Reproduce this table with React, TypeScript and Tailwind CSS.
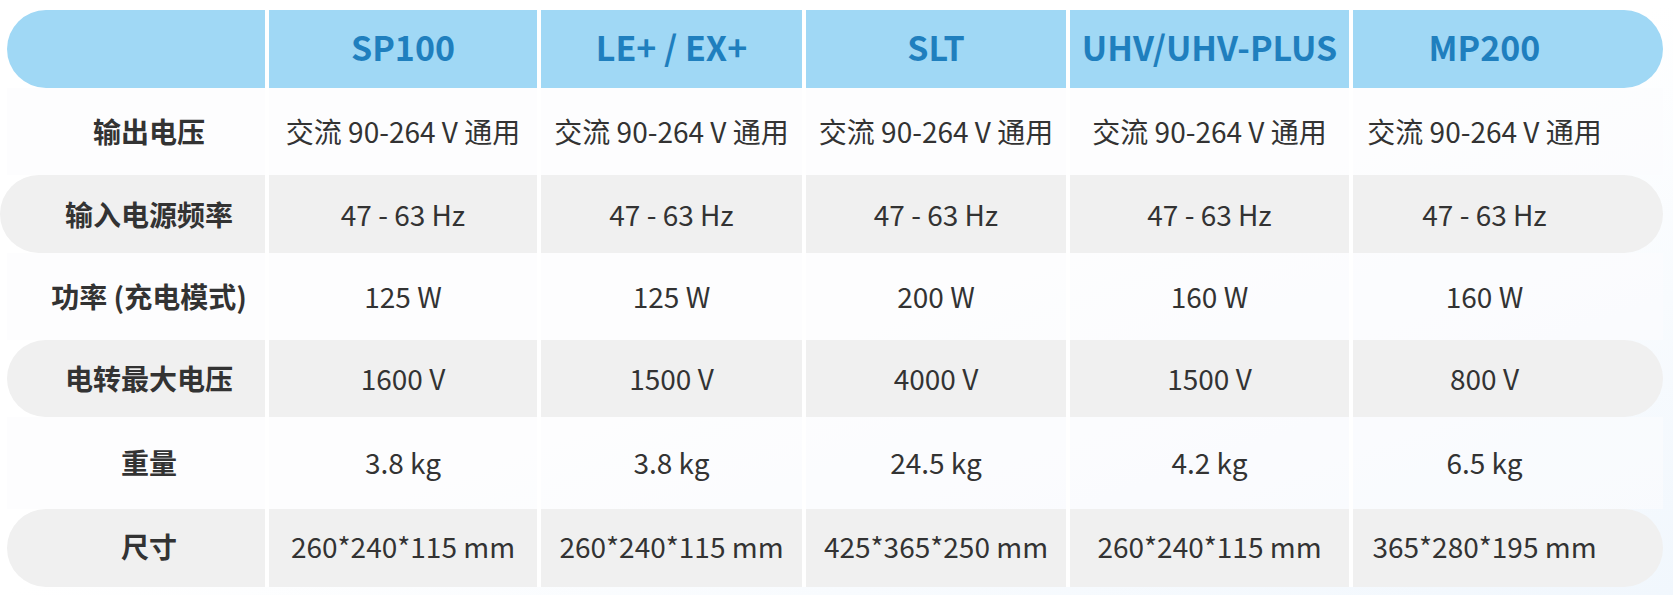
const models = ["SP100", "LE+ / EX+", "SLT", "UHV/UHV-PLUS", "MP200"];

const rows: { label: string; values: string[] }[] = [
  { label: "输出电压", values: Array(5).fill("交流 90-264 V 通用") },
  { label: "输入电源频率", values: Array(5).fill("47 - 63 Hz") },
  { label: "功率 (充电模式)", values: ["125 W", "125 W", "200 W", "160 W", "160 W"] },
  { label: "电转最大电压", values: ["1600 V", "1500 V", "4000 V", "1500 V", "800 V"] },
  { label: "重量", values: ["3.8 kg", "3.8 kg", "24.5 kg", "4.2 kg", "6.5 kg"] },
  { label: "尺寸", values: ["260*240*115 mm", "260*240*115 mm", "425*365*250 mm", "260*240*115 mm", "365*280*195 mm"] },
];

// widths include the 4px white separator on the left of each data column
const colWidths = ["w-[272px]", "w-[265px]", "w-[264px]", "w-[283px]", "w-[314px]"];
const rowHeights = ["h-[87px]", "h-[78px]", "h-[87px]", "h-[77px]", "h-[92px]", "h-[78px]"];
const rowPad = ["pb-[1px]", "pb-[1px]", "pb-[1px]", "pb-[1px]", "pb-[2px]", "pb-[5px]"];

export default function App() {
  return (
    <div
      className="min-h-[595px] w-full bg-linear-to-br from-white via-white to-[#f1f7fd] pt-[10px] pl-[7px]"
      style={{ fontFamily: '"Noto Sans CJK SC", "Noto Sans", sans-serif' }}
    >
      <div className="w-[1656px]">
        {/* Header */}
        <div className="flex h-[78px]">
          <div className="w-[258px] rounded-l-full bg-[#a0d8f5]" />
          {models.map((m, i) => (
            <div key={m} className={`${colWidths[i]} border-l-4 border-white`}>
              <div
                className={`flex h-full w-full items-center justify-center bg-[#a0d8f5] pb-[6px] ${i === 4 ? "rounded-r-full pr-[47px]" : ""}`}
              >
                <span className="text-[34px] font-bold text-[#1f7fbe]">{m}</span>
              </div>
            </div>
          ))}
        </div>

        {/* Body */}
        {rows.map((r, ri) => {
          const gray = ri % 2 === 1;
          return (
            <div key={r.label} className={`flex ${rowHeights[ri]}`}>
              <div
                className={`flex items-center justify-center ${rowPad[ri]} ${gray ? "rounded-l-full bg-[#f0f0f0]" : "bg-[#fbfcfe]/60"} ${ri === 1 ? "-ml-[7px] w-[265px] pl-[33px]" : "w-[258px] pl-[26px]"}`}
              >
                <span className="text-[28px] font-bold text-[#333333]">{r.label}</span>
              </div>
              {r.values.map((v, i) => (
                <div key={i} className={`${colWidths[i]} border-l-4 border-white`}>
                  <div
                    className={`flex h-full w-full items-center justify-center ${rowPad[ri]} ${gray ? "bg-[#f0f0f0]" : "bg-[#fbfcfe]/60"} ${i === 4 ? "pr-[47px]" : ""} ${gray && i === 4 ? "rounded-r-full" : ""}`}
                  >
                    <span className="text-[28px] text-[#333333]">{v}</span>
                  </div>
                </div>
              ))}
            </div>
          );
        })}
      </div>
    </div>
  );
}
